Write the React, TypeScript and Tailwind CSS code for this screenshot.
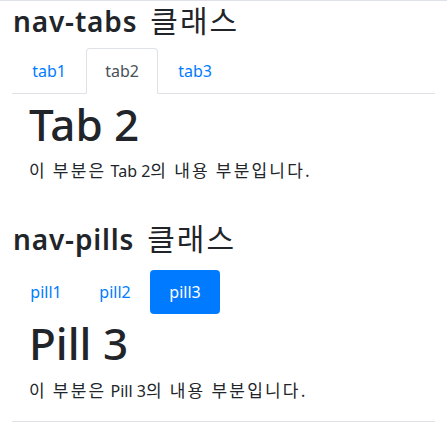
import React from "react";

const latin = { fontFamily: '"Noto Sans", "Noto Sans CJK KR", sans-serif' };
const kr = { fontFamily: '"Noto Sans CJK KR", sans-serif' };

function KH({ children }: { children: React.ReactNode }) {
  return (
    <span className="text-[30px] font-normal leading-[34px] tracking-[2px] ml-[13px]" style={kr}>
      {children}
    </span>
  );
}

function KP({ children }: { children: React.ReactNode }) {
  return (
    <span className="text-[17px] font-normal leading-[24px] tracking-[2.2px]" style={kr}>
      {children}
    </span>
  );
}

export default function App() {
  return (
    <div className="w-[447px] h-[443px] overflow-hidden bg-white text-[#212529] border-t border-[#dee2e6]" style={latin}>
      <div className="px-3">
        <h3 className="text-[28px] font-semibold leading-[34px] tracking-[0.03em] mt-[1px] ml-px whitespace-nowrap">
          nav-tabs<KH>클래스</KH>
        </h3>
        <ul className="flex border-b border-[#dee2e6] mt-[10px] h-[46px]">
          <li className="w-[74px] flex items-center justify-center text-[16px] text-[#007bff] border border-transparent">tab1</li>
          <li className="w-[72px] flex items-center justify-center text-[16px] text-[#495057] bg-white border border-[#dee2e6] border-b-white rounded-t-[4px] -mb-px">tab2</li>
          <li className="w-[74px] flex items-center justify-center text-[16px] text-[#007bff] border border-transparent">tab3</li>
        </ul>
        <div className="pl-[17px]">
          <h1 className="text-[44px] font-medium leading-[53px] mt-[4px]">Tab 2</h1>
          <p className="text-[16px] leading-[24px] mt-[7px] whitespace-nowrap">
            <KP>이 부분은</KP> Tab 2<KP>의 내용 부분입니다.</KP>
          </p>
        </div>
        <h3 className="text-[28px] font-semibold leading-[34px] tracking-[0.03em] mt-[37px] ml-px whitespace-nowrap">
          nav-pills<KH>클래스</KH>
        </h3>
        <ul className="flex mt-[14px] h-[44px]">
          <li className="w-[68px] flex items-center justify-center text-[16px] text-[#007bff] rounded-[4px]">pill1</li>
          <li className="w-[70px] flex items-center justify-center text-[16px] text-[#007bff] rounded-[4px]">pill2</li>
          <li className="w-[70px] flex items-center justify-center text-[16px] text-white bg-[#007bff] rounded-[4px]">pill3</li>
        </ul>
        <div className="pl-[17px]">
          <h1 className="text-[44px] font-medium leading-[53px] mt-[3px]">Pill 3</h1>
          <p className="text-[16px] leading-[24px] mt-[8px] whitespace-nowrap">
            <KP>이 부분은</KP> Pill 3<KP>의 내용 부분입니다.</KP>
          </p>
        </div>
        <hr className="border-t border-[#dee2e6] mt-[18px]" />
      </div>
    </div>
  );
}
